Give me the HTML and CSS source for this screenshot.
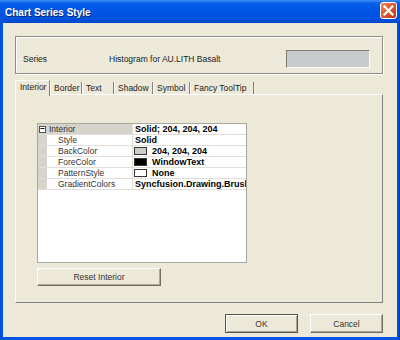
FILE: index.html
```html
<!DOCTYPE html>
<html lang="en">
<head>
    <meta charset="UTF-8">
    <title>Chart Series Style</title>
    <link rel="stylesheet" href="styles.css">
</head>
<body>
    <div class="window">
        <div class="titlebar">
            <span class="title">Chart Series Style</span>
            <svg class="close" width="17" height="17" viewBox="0 0 17 17">
                <defs>
                    <linearGradient id="cg" x1="0" y1="0" x2="1" y2="1">
                        <stop offset="0" stop-color="#ef8f6c"/>
                        <stop offset="0.5" stop-color="#d9582f"/>
                        <stop offset="1" stop-color="#b8371a"/>
                    </linearGradient>
                </defs>
                <rect x="0.5" y="0.5" width="16" height="16" rx="2.5" fill="url(#cg)" stroke="#fff"/>
                <path d="M4.5 4.5 L12.5 12.5 M12.5 4.5 L4.5 12.5" stroke="#fff" stroke-width="2.2" stroke-linecap="square"/>
            </svg>
        </div>
        <div class="client">
            <div class="groupbox">
                <span class="series-label">Series</span>
                <span class="series-name">Histogram for AU.LITH Basalt</span>
                <span class="series-swatch"></span>
            </div>

            <div class="tabs">
                <div class="tab active" style="width:35px">Interior</div>
                <div class="tab" style="width:32px">Border</div>
                <div class="tab" style="width:32px">Text</div>
                <div class="tab" style="width:39px">Shadow</div>
                <div class="tab" style="width:37px">Symbol</div>
                <div class="tab" style="width:64px">Fancy ToolTip</div>
            </div>
            <div class="pane">
                <div class="grid">
                    <div class="row category">
                        <div class="cell name"><span class="toggle">&minus;</span>Interior</div>
                        <div class="cell value">Solid; 204, 204, 204</div>
                    </div>
                    <div class="row">
                        <div class="gutter"></div>
                        <div class="cell name">Style</div>
                        <div class="cell value">Solid</div>
                    </div>
                    <div class="row">
                        <div class="gutter"></div>
                        <div class="cell name">BackColor</div>
                        <div class="cell value"><span class="chip chip-gray"></span>204, 204, 204</div>
                    </div>
                    <div class="row">
                        <div class="gutter"></div>
                        <div class="cell name">ForeColor</div>
                        <div class="cell value"><span class="chip chip-black"></span>WindowText</div>
                    </div>
                    <div class="row">
                        <div class="gutter"></div>
                        <div class="cell name">PatternStyle</div>
                        <div class="cell value"><span class="chip chip-white"></span>None</div>
                    </div>
                    <div class="row">
                        <div class="gutter"></div>
                        <div class="cell name">GradientColors</div>
                        <div class="cell value">Syncfusion.Drawing.BrushInfo</div>
                    </div>
                </div>
                <button class="btn reset">Reset Interior</button>
            </div>

            <div class="actions">
                <button class="btn default">OK</button>
                <button class="btn">Cancel</button>
            </div>
        </div>
    </div>
</body>
</html>
```

FILE: styles.css
```css
body {
    margin: 0;
    font-family: 'Liberation Sans', Arial, sans-serif;
    font-size: 8.5px;
    color: #222;
}
.window {
    width: 400px;
    height: 340px;
    display: flex;
    flex-direction: column;
    background: linear-gradient(90deg, #0a3fc9 0, #0058ee 1px, #0055e5 3px, #0055e5 397px, #0049d4 399px, #0030a8 400px);
}
.titlebar {
    height: 23px;
    display: flex;
    align-items: center;
    justify-content: space-between;
    padding: 0 3px 0 5px;
    background: linear-gradient(180deg, #3d8ff8 0, #0a62e8 3px, #0058e6 7px, #0054e3 14px, #0052dd 19px, #0046c8 23px);
}
.title {
    color: #fff;
    font-weight: bold;
    font-size: 10px;
    text-shadow: 1px 1px 0 #0a246a;
    margin-top: 1px;
}
.close {
    display: block;
    margin-top: -3px;
}
.client {
    flex: 1;
    margin: 0 3px 3px 3px;
    background: #ece9d8;
    padding: 13px 14px 4px 12px;
    display: flex;
    flex-direction: column;
}
.groupbox {
    height: 38px;
    box-sizing: border-box;
    border: 1px solid #8f8d85;
    box-shadow: inset 1px 1px 0 #fff, 1px 1px 0 #fff;
    display: flex;
    align-items: flex-end;
    padding: 0 12px 5px 7px;
}
.series-label {
    width: 86px;
    line-height: 18px;
}
.series-name {
    flex: 1;
    line-height: 18px;
}
.series-swatch {
    width: 84px;
    height: 18px;
    box-sizing: border-box;
    background: #c8c9cd;
    border-top: 1px solid #7c7b74;
    border-left: 1px solid #7c7b74;
    border-right: 1px solid #fff;
    border-bottom: 1px solid #fff;
}
.tabs {
    display: flex;
    align-items: flex-end;
    margin-top: 6px;
    height: 15px;
}
.tab {
    height: 13px;
    box-sizing: border-box;
    padding: 1px 0 0 3px;
    border-left: 1px solid #fff;
    border-right: 1px solid #808080;
    line-height: 11px;
    white-space: nowrap;
}
.tab.active {
    height: 16px;
    padding: 1px 0 0 4px;
    border-top: 1px solid #fff;
    background: #ece9d8;
    position: relative;
    z-index: 1;
    margin-bottom: -1px;
}
.pane {
    height: 209px;
    box-sizing: border-box;
    border-top: 1px solid #fff;
    border-left: 1px solid #fff;
    border-right: 1px solid #808080;
    border-bottom: 1px solid #808080;
    margin-top: -1px;
    padding: 28px 0 0 21px;
    display: flex;
    flex-direction: column;
    align-items: flex-start;
}
.grid {
    width: 210px;
    height: 140px;
    box-sizing: border-box;
    border: 1px solid #a8a7a0;
    background: #fff;
    overflow: hidden;
}
.row {
    display: flex;
    height: 11px;
    box-sizing: border-box;
    border-bottom: 1px solid #e0ded6;
}
.gutter {
    width: 9px;
    background: #d6d3ca;
}
.cell {
    line-height: 10px;
    white-space: nowrap;
    overflow: hidden;
}
.name {
    width: 86px;
    box-sizing: border-box;
    padding-left: 11px;
    border-right: 1px solid #e0ded6;
    color: #333;
}
.category .name {
    width: 95px;
    padding-left: 1px;
    background: #d6d3ca;
    display: flex;
    align-items: center;
}
.toggle {
    width: 7px;
    height: 7px;
    box-sizing: border-box;
    border: 1px solid #555;
    background: #fff;
    font-size: 8px;
    line-height: 4px;
    text-align: center;
    margin-right: 3px;
    color: #000;
    font-weight: bold;
}
.value {
    flex: 1;
    padding-left: 2px;
    font-weight: bold;
    font-size: 9px;
    color: #000;
    display: flex;
    align-items: center;
}
.chip {
    width: 13px;
    height: 8px;
    box-sizing: border-box;
    border: 1px solid #333;
    margin: 0 5px 0 -1px;
}
.chip-gray {
    background: #cccccc;
}
.chip-black {
    background: #000;
}
.chip-white {
    background: #fff;
}
.btn {
    font-family: 'Liberation Sans', Arial, sans-serif;
    font-size: 8.5px;
    color: #333;
    background: #ece9d8;
    border-top: 1px solid #fff;
    border-left: 1px solid #fff;
    border-right: 1px solid #716f64;
    border-bottom: 1px solid #716f64;
    box-shadow: inset -1px -1px 0 #aca899;
    padding: 0;
}
.reset {
    width: 124px;
    height: 18px;
    margin-top: 5px;
}
.actions {
    display: flex;
    justify-content: flex-end;
    gap: 12px;
    margin-top: 11px;
}
.actions .btn {
    width: 73px;
    height: 19px;
}
.btn.default {
    border: 1px solid #55544c;
    box-shadow: inset 1px 1px 0 #fff, inset -1px -1px 0 #aca899;
}
```
